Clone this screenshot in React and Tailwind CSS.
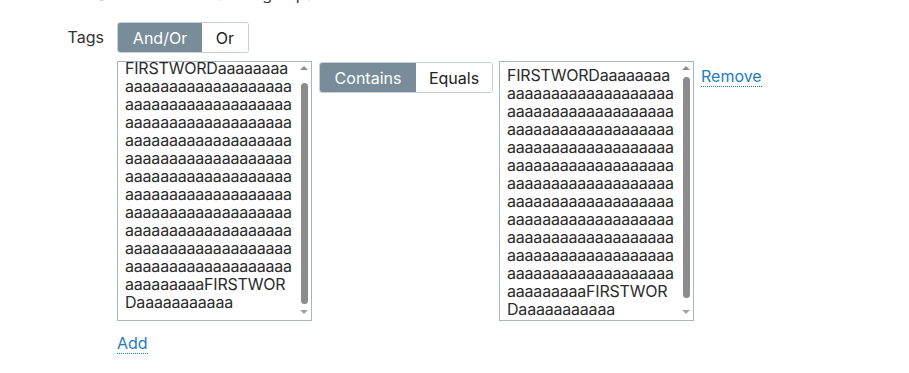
import React from "react";

const LINES = [
  "FIRSTWORDaaaaaaaa",
  "aaaaaaaaaaaaaaaaaaa",
  "aaaaaaaaaaaaaaaaaaa",
  "aaaaaaaaaaaaaaaaaaa",
  "aaaaaaaaaaaaaaaaaaa",
  "aaaaaaaaaaaaaaaaaaa",
  "aaaaaaaaaaaaaaaaaaa",
  "aaaaaaaaaaaaaaaaaaa",
  "aaaaaaaaaaaaaaaaaaa",
  "aaaaaaaaaaaaaaaaaaa",
  "aaaaaaaaaaaaaaaaaaa",
  "aaaaaaaaaaaaaaaaaaa",
  "aaaaaaaaaFIRSTWOR",
  "Daaaaaaaaaaa",
];

function ScrollBar({ atBottom }) {
  return (
    <div className="w-[15px] shrink-0 flex flex-col items-center pl-[1px] pt-[4px] pb-[6px]">
      <div className="w-0 h-0 border-l-[4px] border-r-[4px] border-b-[4px] border-l-transparent border-r-transparent border-b-[#8f8f8f]" />
      <div
        className={
          atBottom
            ? "w-[7px] flex-1 rounded-full bg-[#8c8c8c] mt-[13px] mb-[6px]"
            : "w-[7px] flex-1 rounded-full bg-[#8c8c8c] mt-[7px] mb-[12px]"
        }
      />
      <div className="w-0 h-0 border-l-[4px] border-r-[4px] border-t-[4px] border-l-transparent border-r-transparent border-t-[#a3a3a3]" />
    </div>
  );
}

function TextBox({ scrolled }) {
  return (
    <div className="w-[195px] h-[260px] shrink-0 flex border border-[#a9b5bd] bg-white overflow-hidden">
      <div className="flex-1 min-w-0 overflow-hidden pl-[7px]">
        <div
          className={
            scrolled
              ? "-mt-[3px] text-[16px] leading-[18px] tracking-[-0.2px] text-[#2b2b2b]"
              : "mt-[4px] text-[16px] leading-[18px] tracking-[-0.2px] text-[#2b2b2b]"
          }
        >
          {LINES.map((l, i) => (
            <div key={i} className="whitespace-nowrap">
              {l}
            </div>
          ))}
        </div>
      </div>
      <ScrollBar atBottom={scrolled} />
    </div>
  );
}

function Segmented({ items, active }) {
  return (
    <div className="flex h-[31px] rounded-[3px] border border-[#c8d0d6] overflow-hidden shrink-0">
      {items.map((it, i) => (
        <div
          key={it.label}
          className={
            i === active
              ? "flex items-center justify-center bg-[#788d99] text-white " + it.w
              : "flex items-center justify-center bg-white text-[#222] " + it.w
          }
        >
          {it.label}
        </div>
      ))}
    </div>
  );
}

export default function App() {
  return (
    <div className="min-h-[373px] w-[909px] bg-white font-['Inter','Noto_Sans',sans-serif] text-[16px] text-[#333] overflow-hidden">
      <div className="h-[3px] overflow-hidden">
        <div className="-mt-[15px] ml-[96px] leading-[18px] whitespace-nowrap text-[#333]">
          Show items if matching to parent
        </div>
      </div>
      <div className="flex mt-[19px]">
        <div className="w-[104px] shrink-0 text-right leading-[31px] text-[#333]">Tags</div>
        <div className="ml-[13px] flex flex-col">
          <div className="flex">
            <Segmented
              items={[
                { label: "And/Or", w: "w-[84px]" },
                { label: "Or", w: "w-[46px]" },
              ]}
              active={0}
            />
          </div>
          <div className="flex items-start mt-[8px]">
            <TextBox scrolled />
            <div className="ml-[7px] mt-[1px]">
              <Segmented
                items={[
                  { label: "Contains", w: "w-[96px]" },
                  { label: "Equals", w: "w-[76px]" },
                ]}
                active={0}
              />
            </div>
            <div className="ml-[6px]">
              <TextBox />
            </div>
            <a className="ml-[7px] mt-[5px] leading-[20px] text-[#1f7cc1] border-b border-dotted border-[#1f7cc1] cursor-pointer">
              Remove
            </a>
          </div>
          <div className="mt-[12px] flex">
            <a className="leading-[20px] text-[#1f7cc1] border-b border-dotted border-[#1f7cc1] cursor-pointer">
              Add
            </a>
          </div>
        </div>
      </div>
    </div>
  );
}
